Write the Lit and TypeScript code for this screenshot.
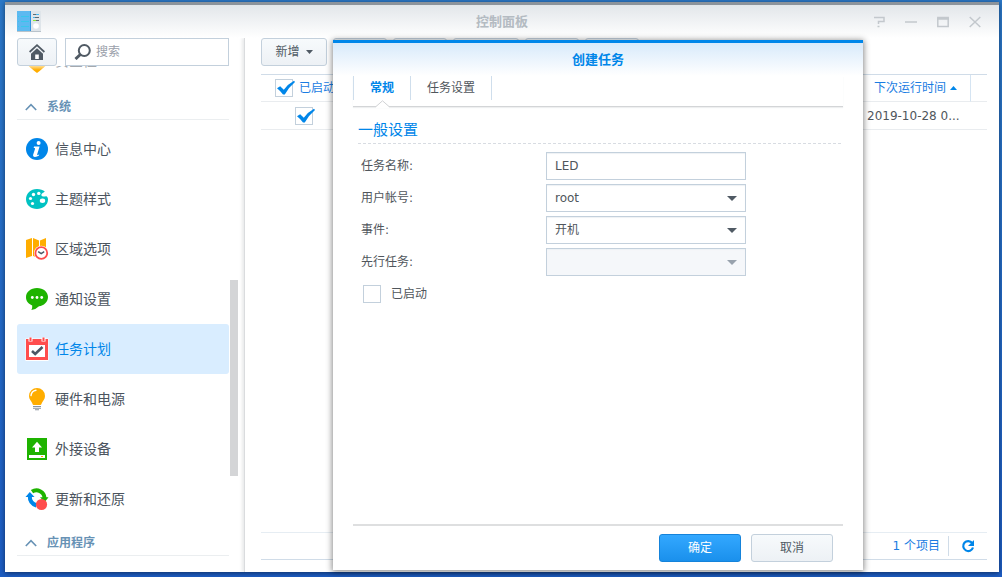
import { LitElement, html, css, svg, nothing } from "lit";
import { customElement, property, state } from "lit/decorators.js";
import { classMap } from "lit/directives/class-map.js";

const icons: Record<string, unknown> = {
  shield: svg`<defs><linearGradient id="fade" x1="0" y1="0" x2="0" y2="1"><stop offset=".6" stop-color="#ffe9b8"/><stop offset=".85" stop-color="#ffad00"/></linearGradient></defs><path d="M1 3h20v11q-2 3-10 9q-8-6-10-9z" fill="url(#fade)"/>`,
  info: svg`<circle cx="11" cy="11" r="11" fill="#0086e9"/><circle cx="12.6" cy="5" r="2" fill="#fff"/><path d="M8 8.6h5.6l-2.4 7.7q-.2 1 .6.8l1.4-.5-.2 1q-2 1.4-4 1.4-2.500-.1-1.800-2.500l1.800-5.500q.3-1-.5-1H7.700z" fill="#fff"/>`,
  palette: svg`<path d="M11 1C4.500 1 0 5.600 0 11.200 0 17 5 21 11 21c5.500 0 11-3.600 11-9.400 0-1.900-.8-3.300-1.900-3.300-1.300 0-1.900.4-3.200.2-1.800-.3-2-2-.8-3 1.300-1 2-.9 2.700-1.900C17.200 2 14.300 1 11 1z" fill="#00c2c2"/><g fill="#fff"><circle cx="7.500" cy="6.500" r="1.700"/><circle cx="12.800" cy="5.400" r="1.700"/><circle cx="4.500" cy="10.500" r="1.600"/><circle cx="6.500" cy="15.500" r="1.600"/><ellipse cx="16.500" cy="12.800" rx="2.700" ry="2.200"/></g>`,
  region: svg`<path d="M0 2l6-2v18l-6 2zM7 0l6 2.500V20L7 18zM14 2.500L20 0v16l-6 3z" fill="#ffad00"/><circle cx="15.300" cy="15" r="7.300" fill="#fff"/><circle cx="15.300" cy="15" r="5.900" fill="#fff" stroke="#ff4d4d" stroke-width="1.800"/><path d="M12.200 13.600l3 2 3-2" fill="none" stroke="#4b5765" stroke-width="1.300"/>`,
  chat: svg`<path d="M11 0c6.300 0 11 3.900 11 9s-4.200 8.700-9 9.300q-3 3.200-7.600 3.700 1.100-2 .8-4.600C2.500 16 0 13 0 9.200 0 4 4.700 0 11 0z" fill="#1eb300"/><g fill="#fff"><circle cx="6.300" cy="9.500" r="1.400"/><circle cx="11" cy="9.500" r="1.400"/><circle cx="15.700" cy="9.500" r="1.400"/></g>`,
  task: svg`<path d="M-.5 0.500h23v22.500h-23z" fill="#fff"/><path d="M0 1h22v21H0z" fill="#ff4d4d"/><path d="M3 7h16v12H3z" fill="#fff"/><path d="M4.500-.5v4M17.500-.5v4" stroke="#fff" stroke-width="4"/><path d="M4.500-.5v3.500M17.500-.5v3.500" stroke="#ff4d4d" stroke-width="2"/><path d="M6 13l3.200 3 7.300-7" fill="none" stroke="#4b5765" stroke-width="2.600"/>`,
  bulb: svg`<path d="M11 0a8 8 0 0 1 8 8c0 3.200-2 4.800-3 6.800-.6 1-.5 2.200-1.700 2.200H7.700C6.500 17 6.600 15.800 6 14.800 5 12.800 3 11.200 3 8a8 8 0 0 1 8-8z" fill="#ffad00"/><path d="M5 7.600a6 6 0 0 1 5-5.400" fill="none" stroke="#fff" stroke-width="1.400" stroke-linecap="round"/><path d="M7 18.500h8M7 20.300h8M9 21.800h4" stroke="#8a94a0" stroke-width="1.100"/>`,
  device: svg`<path d="M1 0h20v22H1z" fill="#1eb300"/><path d="M11 3.800l5 5.700h-3V14H9V9.500H6z" fill="#fff"/><path d="M3 17h16v3H3z" fill="#fff"/><path d="M15 18h2v1h-2z" fill="#ffad00"/>`,
  update: svg`<path d="M6 3.700A8 8 0 0 1 18.500 10" fill="none" stroke="#1eb300" stroke-width="4"/><path d="M14 9.300h8.500l-3.800 4.900z" fill="#1eb300"/><path d="M3.800 8Q3.500 15 10.500 17.500" fill="none" stroke="#0086e9" stroke-width="4"/><path d="M-.5 9L3.800 4l4.700 5z" fill="#0086e9"/><circle cx="15.500" cy="16.500" r="5.600" fill="#ff4d4d"/>`,
};

const base = css`
  * { box-sizing: border-box; }
  svg { display: block; flex: none; }
  button, input, select { font: inherit; color: inherit; margin: 0; }
  .btn {
    height: 28px;
    padding: 0 13px;
    border: 1px solid #c3d0dc;
    border-radius: 3px;
    background: linear-gradient(#f7fafc, #edf1f5);
    color: #505a64;
    display: flex;
    align-items: center;
    justify-content: center;
    gap: 6px;
  }
`;

@customElement("tick-box")
class TickBox extends LitElement {
  static styles = [base, css`
    :host { display: block; }
    .tick { display: flex; align-items: center; gap: var(--tick-gap, 6px); }
    .mark { display: grid; width: 18px; height: 18px; }
    .mark > * { grid-area: 1 / 1; }
    .input { appearance: none; width: 18px; height: 18px; border: 1px solid #c3d0dc; background: #fff; }
    .check { pointer-events: none; overflow: visible; }
  `];
  @property() label = "";
  @property() name = "";
  @property({ type: Boolean }) checked = false;
  render() {
    return html`<label class="tick">
      <span class="mark">
        <input class="input" type="checkbox" aria-label=${this.label || this.name} .checked=${this.checked}
          @change=${(e: Event) => (this.checked = (e.target as HTMLInputElement).checked)}>
        ${this.checked ? html`<svg class="check" width="18" height="18" viewBox="0 0 18 18"><path d="M2 9.200l3.200-2 3.600 3.600Q13 5 19 1.800l1 1.200Q14 8 9.800 15.500H8Q5 11.500 2 9.200z" fill="#0086e9"/></svg>` : nothing}
      </span>
      ${this.label ? html`<span>${this.label}</span>` : nothing}
    </label>`;
  }
}

@customElement("side-nav")
class SideNav extends LitElement {
  static styles = [base, css`
    :host { display: flex; flex-direction: column; min-height: 0; padding-left: 12px; }
    .top { display: flex; gap: 8px; padding-right: 15px; }
    .home { width: 40px; padding: 0; }
    .search { flex: 1; min-width: 0; height: 28px; display: flex; align-items: center; gap: 5px; border: 1px solid #c3d0dc; padding: 0 8px; }
    .field { flex: 1; min-width: 0; border: 0; outline: 0; padding: 0; background: none; }
    .field::placeholder { color: #9aa0aa; opacity: 1; }
    .scroll { flex: 1; min-height: 0; display: flex; gap: 1px; padding-right: 6px; }
    .list { flex: 1; min-width: 0; overflow: hidden; }
    .track { width: 8px; display: flex; flex-direction: column; }
    .before { flex: 214; }
    .thumb { flex: 196; background: #d4d5d7; }
    .after { flex: 96; }
    .clipped { display: flex; flex-direction: column; justify-content: flex-end; height: 22px; padding-bottom: 2px; overflow: hidden; }
    .clipped .item { color: #a4a9af; }
    .item { flex: none; height: 50px; display: flex; align-items: center; gap: 7px; padding-left: 9px; border-radius: 3px; font-size: 14px; color: #4b545e; text-decoration: none; }
    .item svg { overflow: visible; }
    .on { background: #d9edff; color: #0086e9; }
    .group { width: 100%; height: 32px; border: 0; border-bottom: 1px solid #ebeef0; background: none; display: flex; align-items: center; gap: 10px; padding: 6px 0 0 8px; color: #6792b5; font-weight: bold; }
    .items { padding-top: 4px; }
  `];
  @state() active = "任务计划";
  items: [string, string][] = [
    ["info", "信息中心"], ["palette", "主题样式"], ["region", "区域选项"], ["chat", "通知设置"],
    ["task", "任务计划"], ["bulb", "硬件和电源"], ["device", "外接设备"], ["update", "更新和还原"],
  ];
  item([icon, text]: [string, string]) {
    return html`<a href="#" class=${classMap({ item: true, on: text === this.active })}
      @click=${(e: Event) => { e.preventDefault(); this.active = text; }}>
      <svg width="22" height="22" viewBox="0 0 22 22">${icons[icon]}</svg><span>${text}</span></a>`;
  }
  group(text: string) {
    return html`<button class="group"><svg width="12" height="8" viewBox="0 0 12 8"><path d="M.8 7L6 1.600 11.200 7" fill="none" stroke="#6792b5" stroke-width="1.600"/></svg>${text}</button>`;
  }
  render() {
    return html`
      <div class="top">
        <button class="btn home" aria-label="主页"><svg width="16" height="16" viewBox="0 0 16 16"><path d="M.6 8L8 1.200 15.400 8" fill="none" stroke="#505a64" stroke-width="1.700"/><path d="M8 4.300L14 9.800V16H2V9.800z" fill="#505a64"/><path d="M6.200 10.500h3.600V15H6.200z" fill="#fff"/></svg></button>
        <label class="search"><svg width="17" height="16" viewBox="0 0 17 16"><circle cx="10.300" cy="6.500" r="5.500" fill="none" stroke="#505a64" stroke-width="2"/><path d="M6.300 10.500L1.500 15" stroke="#505a64" stroke-width="3"/></svg>
          <input class="field" type="text" placeholder="搜索" aria-label="搜索"></label>
      </div>
      <div class="scroll">
        <nav class="list">
          <div class="clipped">${this.item(["shield", "安全性"])}</div>
          ${this.group("系统")}
          <div class="items">${this.items.map((i) => this.item(i))}</div>
          ${this.group("应用程序")}
        </nav>
        <div class="track"><span class="before"></span><span class="thumb"></span><span class="after"></span></div>
      </div>`;
  }
}

@customElement("task-list")
class TaskList extends LitElement {
  static styles = [base, css`
    :host { display: flex; flex-direction: column; min-width: 0; padding: 0 12px 12px 16px; border-left: 1px solid #dadcde; box-shadow: -2px 0 3px #e9eaeb; clip-path: inset(0 0 0 -5px); }
    .tools { display: flex; gap: 6px; padding-bottom: 8px; }
    .short { width: 54px; }
    .long { width: 66px; }
    .table { width: 100%; table-layout: fixed; border-collapse: separate; border-spacing: 0; border-top: 1px solid #d0dce8; }
    .c1 { width: 87px; }
    .c3 { width: 110px; }
    .c4 { width: 16px; }
    th, td { padding: 0; border-bottom: 1px solid #e9ecef; }
    th { height: 27px; color: #1a7ce2; font-weight: normal; text-align: left; }
    td { height: 28px; }
    .box { padding-left: 14px; white-space: nowrap; }
    .center { padding-left: 34px; }
    .next { border-right: 1px solid #d5e4f2; }
    .sort { display: flex; align-items: center; justify-content: center; gap: 4px; }
    .date { padding-left: 6px; white-space: nowrap; color: #50565c; }
    .space { flex: 1; }
    .foot { height: 28px; display: flex; align-items: center; justify-content: flex-end; border-top: 1px solid #e6edf3; border-bottom: 1px solid #d0dce8; color: #1a7ce2; }
    .count { padding-right: 8px; border-right: 1px solid #d0dce8; line-height: 20px; }
    .reload { width: 38px; padding: 0; border: 0; background: none; display: flex; justify-content: center; }
  `];
  render() {
    return html`
      <div class="tools">
        <button class="btn long">新增<svg width="7" height="4" viewBox="0 0 7 4"><path d="M0 0h7L3.500 4z" fill="#505a64"/></svg></button>
        ${["short", "short", "long", "short", "short"].map((size) => html`<button class="btn ${size}" disabled></button>`)}
      </div>
      <table class="table">
        <colgroup><col class="c1"><col><col class="c3"><col class="c4"></colgroup>
        <thead><tr>
          <th class="box"><tick-box label="已启动" checked></tick-box></th><th></th>
          <th class="next"><span class="sort">下次运行时间<svg width="7" height="4" viewBox="0 0 7 4"><path d="M0 4h7L3.500 0z" fill="#0086e9"/></svg></span></th><th></th>
        </tr></thead>
        <tbody><tr><td class="center"><tick-box name="已启动" checked></tick-box></td><td></td><td class="date">2019-10-28 0...</td><td></td></tr></tbody>
      </table>
      <div class="space"></div>
      <div class="foot"><span class="count">1 个项目</span>
        <button class="reload" aria-label="刷新"><svg width="14" height="14" viewBox="0 0 14 14"><path d="M11.200 4A5 5 0 1 0 12 8.500" fill="none" stroke="#0086e9" stroke-width="2.200"/><path d="M13 1v6H7z" fill="#0086e9"/></svg></button>
      </div>`;
  }
}

@customElement("task-dialog")
class TaskDialog extends LitElement {
  static styles = [base, css`
    :host { display: flex; flex-direction: column; padding: 0 20px 8px; border-top: 3px solid #0086e9; background: linear-gradient(#d8eafb, #fff 33px); box-shadow: 0 1px 6px 1px rgba(0, 0, 0, .45); }
    .title { margin: 0; height: 33px; line-height: 33px; font-size: 13px; text-align: center; color: #0086e9; }
    .tabs { display: flex; height: 31px; border-bottom: 1px solid #d3d5d7; box-shadow: 0 1px 1px #eeeff0; }
    .tab { height: 24px; padding: 0 16px; border: 0; border-left: 1px solid #cfdeec; background: none; color: #50565c; position: relative; }
    .tab:last-child { border-right: 1px solid #cfdeec; }
    .on { color: #0086e9; font-weight: bold; }
    .notch { position: absolute; left: 50%; top: 100%; margin-left: -6px; }
    .body { flex: 1; padding: 9px 0 0 5px; }
    .head { margin: 0 2px 8px 0; height: 28px; line-height: 28px; font-size: 15px; font-weight: normal; color: #0086e9; border-bottom: 1px dashed #d8dce2; }
    .rows { display: grid; grid-template-columns: 185px 200px; row-gap: 4px; padding-left: 3px; align-items: center; color: #50565c; }
    .ctl { width: 100%; height: 28px; padding: 0 8px; border: 1px solid #c3d0dc; border-radius: 0; background: #fff; box-shadow: inset 0 1px 1px #eef1f4; outline: 0; appearance: none; color: #50565c; }
    .ctl:disabled { background: #f5f7fa; opacity: 1; }
    .pick { display: grid; align-items: center; justify-items: end; }
    .pick > * { grid-area: 1 / 1; }
    .arrow { margin-right: 9px; pointer-events: none; z-index: 1; }
    .enabled { padding-left: 2px; height: 28px; display: flex; align-items: center; --tick-gap: 10px; }
    .foot { display: flex; justify-content: flex-end; gap: 10px; border-top: 2px solid #dedfe0; padding: 8px 10px 0 0; }
    .act { width: 82px; }
    .main { border-color: #1583da; background: linear-gradient(#33a8ff, #1a90ec); color: #fff; }
  `];
  @state() tab = 0;
  select(id: string, value: string, disabled = false) {
    return html`<span class="pick"><select class="ctl" id=${id} ?disabled=${disabled}><option>${value}</option></select>
      <svg class="arrow" width="10" height="5" viewBox="0 0 10 5"><path d="M0 0h10L5 5z" fill=${disabled ? "#98a2ad" : "#505a64"}/></svg></span>`;
  }
  render() {
    return html`
      <h2 class="title">创建任务</h2>
      <div class="tabs">${["常规", "任务设置"].map((t, i) => html`<button class=${classMap({ tab: true, on: i === this.tab })} @click=${() => (this.tab = i)}>${t}${i === this.tab
        ? html`<svg class="notch" width="13" height="8" viewBox="0 0 13 8"><path d="M0 8V6.500L6.500 .8 13 6.500V8z" fill="#fff"/><path d="M0 6.500L6.500 .8 13 6.500" fill="none" stroke="#d0d2d4"/></svg>` : nothing}</button>`)}</div>
      <div class="body">
        <h3 class="head">一般设置</h3>
        <div class="rows">
          <label for="name">任务名称:</label><input class="ctl" id="name" type="text" value="LED">
          <label for="user">用户帐号:</label>${this.select("user", "root")}
          <label for="event">事件:</label>${this.select("event", "开机")}
          <label for="pre">先行任务:</label>${this.select("pre", "", true)}
          <div class="enabled"><tick-box label="已启动"></tick-box></div>
        </div>
      </div>
      <div class="foot"><button class="btn act main">确定</button><button class="btn act">取消</button></div>`;
  }
}

@customElement("app-root")
class AppRoot extends LitElement {
  static styles = [base, css`
    :host { display: block; box-sizing: border-box; height: 100vh; padding: 2px 3px 5px 5px; background: linear-gradient(#2b78c8, #1d5cc2); font: 12px/16px "DejaVu Sans", "Noto Sans CJK SC", sans-serif; color: #50565c; }
    .window { position: relative; height: 100%; display: flex; flex-direction: column; background: linear-gradient(#e2e6ea, #fff 33px); border-top: 3px solid #8c939b; box-shadow: 0 1px 5px rgba(0, 0, 0, .5); }
    .bar { height: 33px; display: grid; grid-template-columns: 1fr auto 1fr; align-items: center; padding: 0 12px; }
    .title { margin: 0; font-size: 13px; color: #b4bbc2; }
    .controls { display: flex; justify-content: flex-end; gap: 20px; padding-right: 6px; }
    .control { width: 12px; height: 12px; padding: 0; border: 0; background: none; }
    .body { flex: 1; min-height: 0; display: grid; grid-template-columns: 239px 1fr; }
    .dialog { position: absolute; top: 35px; bottom: 2px; right: 136px; width: 530px; }
  `];
  render() {
    const glyphs: [string, unknown][] = [
      ["帮助", svg`<path d="M1 1.500h10v4H5.500V8" /><path d="M4.500 10.500h2"/>`],
      ["最小化", svg`<path d="M0 6h12"/>`],
      ["最大化", svg`<path d="M.8 1.500h10.400v9H.8zM0 3h12"/>`],
      ["关闭", svg`<path d="M.7 1l10.600 10M11.300 1L.7 11"/>`],
    ];
    return html`<div class="window">
      <header class="bar">
        <svg width="24" height="21" viewBox="0 0 24 21"><path d="M0 0h14v20H0z" fill="#5db9f0"/><path d="M13 0h1v20h-1z" fill="#3193df"/><path d="M14 0h10v20H14z" fill="#dfe5ea"/><path d="M0 20h24v1H0z" fill="#b9c3cb"/><path d="M1 5.500h1M4 5.500h8M1 10.500h1M4 10.500h8M1 15.500h1M4 15.500h8" stroke="#38c6ec"/><path d="M16 3.500h6M16 6.500h6M16 9.500h6" stroke="#5f6973"/><path d="M19 3.500h3M16 6.500h2" stroke="#43b9ef"/><path d="M16 9.500h3" stroke="#8bea32"/><circle cx="19" cy="15" r="2.800" fill="#fff"/></svg>
        <h1 class="title">控制面板</h1>
        <div class="controls">${glyphs.map(([name, shape]) => html`<button class="control" aria-label=${name}><svg width="12" height="12" viewBox="0 0 12 12" fill="none" stroke="#c3c8cd" stroke-width="1.500">${shape}</svg></button>`)}</div>
      </header>
      <div class="body"><side-nav></side-nav><task-list></task-list></div>
      <task-dialog class="dialog"></task-dialog>
    </div>`;
  }
}
